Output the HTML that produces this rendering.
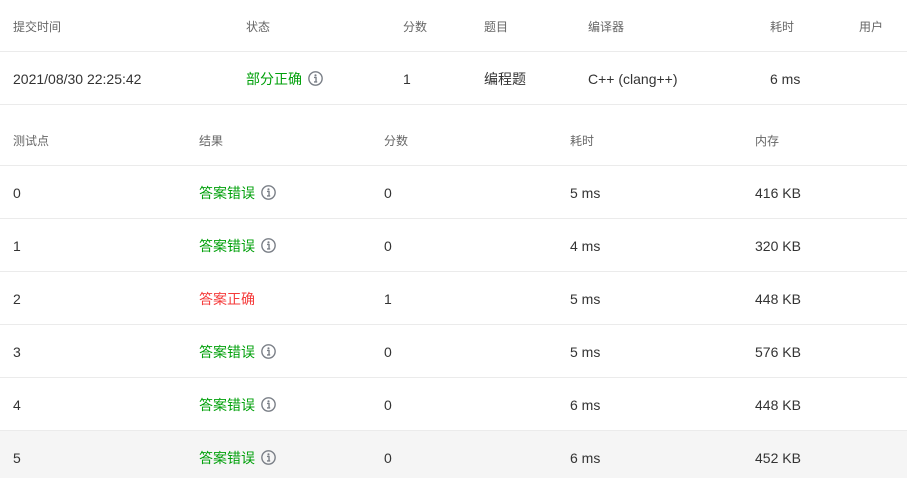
<!DOCTYPE html>
<html><head><meta charset="utf-8"><style>
*{margin:0;padding:0;box-sizing:border-box}
body{width:907px;height:478px;background:#fff;font-family:"Liberation Sans","Noto Sans CJK SC",sans-serif;position:relative;overflow:hidden;color:#333;font-size:14px}
.t{position:absolute;white-space:nowrap;line-height:16px}
.h{color:#666;font-size:12px}
.line{position:absolute;left:0;width:907px;height:1px;background:#ebebeb}
.g{color:#00a00a}
.r{color:#f53a3a}
.ic{display:inline-block;vertical-align:-2px;margin-left:6px}
</style></head><body>
<div style="position:absolute;left:0;top:431px;width:907px;height:47px;background:#f5f5f5"></div>
<div class="line" style="top:51px"></div>
<div class="line" style="top:104px"></div>
<div class="line" style="top:165px"></div>
<div class="line" style="top:218px"></div>
<div class="line" style="top:271px"></div>
<div class="line" style="top:324px"></div>
<div class="line" style="top:377px"></div>
<div class="line" style="top:430px"></div>

<div class="t h" style="left:13px;top:19px">提交时间</div>
<div class="t h" style="left:246px;top:19px">状态</div>
<div class="t h" style="left:403px;top:19px">分数</div>
<div class="t h" style="left:484px;top:19px">题目</div>
<div class="t h" style="left:588px;top:19px">编译器</div>
<div class="t h" style="left:770px;top:19px">耗时</div>
<div class="t h" style="left:859px;top:19px">用户</div>

<div class="t" style="left:13px;top:71px">2021/08/30 22:25:42</div>
<div class="t g" style="left:246px;top:71px">部分正确<svg class="ic" width="15" height="15" viewBox="0 0 14 14"><circle cx="7" cy="7" r="6.2" fill="none" stroke="#7a7f87" stroke-width="1.3"/><circle cx="7" cy="4" r="1" fill="#7a7f87"/><path d="M5.6 6h1.9v4M5.6 10.2h3" stroke="#7a7f87" stroke-width="1.3" fill="none"/></svg></div>
<div class="t" style="left:403px;top:71px">1</div>
<div class="t" style="left:484px;top:71px">编程题</div>
<div class="t" style="left:588px;top:71px">C++ (clang++)</div>
<div class="t" style="left:770px;top:71px">6 ms</div>

<div class="t h" style="left:13px;top:133px">测试点</div>
<div class="t h" style="left:199px;top:133px">结果</div>
<div class="t h" style="left:384px;top:133px">分数</div>
<div class="t h" style="left:570px;top:133px">耗时</div>
<div class="t h" style="left:755px;top:133px">内存</div>

<div id="rows"></div>
<script>
var d=[["0","g","答案错误","0","5 ms","416 KB"],["1","g","答案错误","0","4 ms","320 KB"],["2","r","答案正确","1","5 ms","448 KB"],["3","g","答案错误","0","5 ms","576 KB"],["4","g","答案错误","0","6 ms","448 KB"],["5","g","答案错误","0","6 ms","452 KB"]];
var ic='<svg class="ic" width="15" height="15" viewBox="0 0 14 14"><circle cx="7" cy="7" r="6.2" fill="none" stroke="#7a7f87" stroke-width="1.3"/><circle cx="7" cy="4" r="1" fill="#7a7f87"/><path d="M5.6 6h1.9v4M5.6 10.2h3" stroke="#7a7f87" stroke-width="1.3" fill="none"/></svg>';
var h="";
d.forEach(function(r,i){var y=185+i*53;
h+='<div class="t" style="left:13px;top:'+y+'px">'+r[0]+'</div>';
h+='<div class="t '+r[1]+'" style="left:199px;top:'+y+'px">'+r[2]+(r[1]=="g"?ic:"")+'</div>';
h+='<div class="t" style="left:384px;top:'+y+'px">'+r[3]+'</div>';
h+='<div class="t" style="left:570px;top:'+y+'px">'+r[4]+'</div>';
h+='<div class="t" style="left:755px;top:'+y+'px">'+r[5]+'</div>';});
document.getElementById("rows").innerHTML=h;
</script>
</body></html>
